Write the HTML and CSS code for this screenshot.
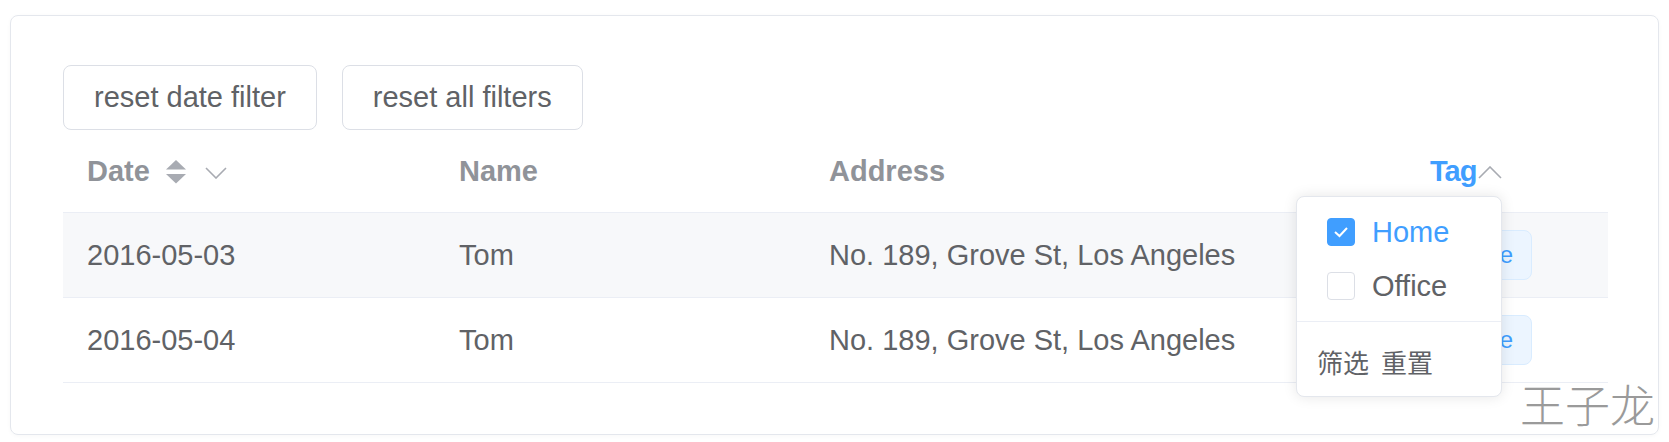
FILE: index.html
```html
<!DOCTYPE html>
<html lang="en">
<head>
<meta charset="utf-8">
<title>Table filter</title>
<link rel="stylesheet" href="styles.css">
</head>
<body>
<div class="card">
  <div class="toolbar">
    <button class="btn">reset date filter</button>
    <button class="btn">reset all filters</button>
  </div>
  <div class="table">
    <div class="row head">
      <div class="cell">
        <span>Date</span>
        <svg class="sort" width="22" height="24" viewBox="0 0 22 24"><polygon points="11,0 21,9.5 1,9.5" fill="#a8abb2"/><polygon points="1,14 21,14 11,23.5" fill="#a8abb2"/></svg>
        <svg class="chev-down" width="22" height="12" viewBox="0 0 22 12"><polyline points="1,1 11,11 21,1" fill="none" stroke="#a8abb2" stroke-width="1.6"/></svg>
      </div>
      <div class="cell">Name</div>
      <div class="cell">Address</div>
      <div class="cell">
        <span class="active">Tag</span>
        <svg class="chev-up" width="24" height="13" viewBox="0 0 24 13"><polyline points="1,12 12,1 23,12" fill="none" stroke="#a8abb2" stroke-width="1.6"/></svg>
      </div>
    </div>
    <div class="row body hover">
      <div class="cell">2016-05-03</div>
      <div class="cell">Tom</div>
      <div class="cell">No. 189, Grove St, Los Angeles</div>
      <div class="cell"><span class="tag">Home</span></div>
    </div>
    <div class="row body">
      <div class="cell">2016-05-04</div>
      <div class="cell">Tom</div>
      <div class="cell">No. 189, Grove St, Los Angeles</div>
      <div class="cell"><span class="tag">Home</span></div>
    </div>
  </div>
  <div class="filter-pop">
    <div class="check-group">
      <label class="check checked">
        <span class="box"><svg width="16" height="12" viewBox="0 0 16 12"><polyline points="2,6 6.5,10 14,2" fill="none" stroke="#fff" stroke-width="2"/></svg></span>
        <span>Home</span>
      </label>
      <label class="check">
        <span class="box"></span>
        <span>Office</span>
      </label>
    </div>
    <div class="pop-footer">
      <span>筛选</span>
      <span>重置</span>
    </div>
  </div>
</div>
<div class="watermark">王子龙</div>
</body>
</html>
```

FILE: styles.css
```css
html, body {
  margin: 0;
  padding: 0;
  background: #ffffff;
}

body {
  font-family: "Liberation Sans", Arial, "Noto Sans CJK SC", sans-serif;
  color: #606266;
  width: 1669px;
  height: 442px;
  overflow: hidden;
  position: relative;
}

.card {
  position: relative;
  margin: 15px 10px 0 10px;
  border: 1px solid #e4e7ed;
  border-radius: 8px;
  padding: 49px 50px 51px 52px;
  box-shadow: 0 1px 4px rgba(0, 0, 0, 0.03);
}

.toolbar {
  display: flex;
  gap: 25px;
  height: 65px;
}

.btn {
  height: 65px;
  padding: 0 30px;
  border: 1px solid #dcdfe6;
  border-radius: 8px;
  background: #fff;
  color: #606266;
  font-family: "Liberation Sans", Arial, sans-serif;
  font-size: 29px;
  line-height: 1;
}

.table {
  display: flex;
  flex-direction: column;
}

.row {
  display: grid;
  grid-template-columns: 372px 370px 1fr 202px;
  border-bottom: 1px solid #ebeef5;
}

.row.head {
  height: 82px;
}

.row.body {
  height: 84px;
}

.row.hover {
  background: #f7f8fa;
}

.cell {
  display: flex;
  align-items: center;
  padding: 0 24px;
  font-size: 29px;
  white-space: nowrap;
}

.head .cell {
  color: #909399;
  font-weight: bold;
}

.head .cell .active {
  color: #409eff;
  letter-spacing: -1px;
}

.sort {
  margin-left: 15px;
  margin-top: 2px;
}

.chev-down {
  margin-left: 18px;
  margin-top: 4px;
}

.chev-up {
  margin-left: 2px;
  margin-top: 2px;
}

.tag {
  display: inline-flex;
  align-items: center;
  height: 48px;
  padding: 0 18px;
  border: 1px solid #d9ecff;
  border-radius: 8px;
  background: #ecf5ff;
  color: #409eff;
  font-size: 24px;
}

.filter-pop {
  position: absolute;
  left: 1285px;
  top: 180px;
  width: 204px;
  background: #fff;
  border: 1px solid #e4e7ed;
  border-radius: 8px;
  box-shadow: 0 0 14px rgba(0, 0, 0, 0.1);
}

.check-group {
  display: flex;
  flex-direction: column;
  gap: 26px;
  padding: 21px 0 21px 30px;
  border-bottom: 1px solid #ebeef5;
}

.check {
  display: flex;
  align-items: center;
  gap: 17px;
  height: 28px;
  font-size: 29px;
  color: #606266;
}

.check .box {
  display: flex;
  align-items: center;
  justify-content: center;
  box-sizing: border-box;
  width: 28px;
  height: 28px;
  border: 1px solid #dcdfe6;
  border-radius: 4px;
  background: #fff;
}

.check.checked {
  color: #409eff;
}

.check.checked .box {
  background: #409eff;
  border-color: #409eff;
}

.pop-footer {
  display: flex;
  align-items: center;
  gap: 12px;
  height: 74px;
  padding: 4px 0 0 20px;
  box-sizing: border-box;
  font-family: "Noto Sans CJK SC", sans-serif;
  font-size: 26px;
  color: #606266;
}

.watermark {
  position: absolute;
  left: 1520px;
  top: 381px;
  font-family: "Noto Sans CJK SC", sans-serif;
  font-weight: 300;
  font-size: 45px;
  line-height: 45px;
  color: #9a9a9a;
  letter-spacing: 0;
}
```
